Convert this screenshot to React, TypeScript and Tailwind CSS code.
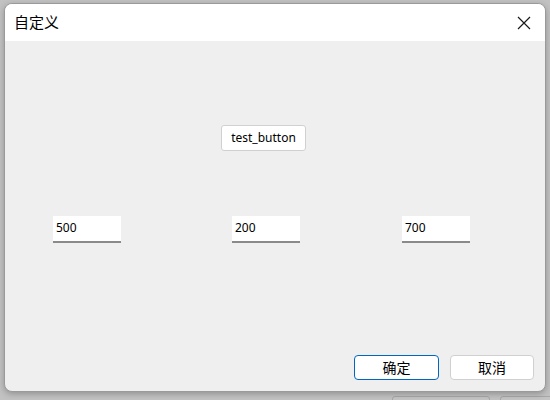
export default function App() {
  return (
    <div className="relative h-[400px] w-[550px] overflow-hidden bg-[#c2c2c2] pl-[4px] pt-[3px] font-['Noto_Sans','Noto_Sans_CJK_SC',sans-serif]">
      {/* window peeking out behind */}
      <div className="absolute left-[392px] top-[396px] h-[10px] w-[98px] rounded-t-[3px] border border-[#a8a8a8] bg-[#c4c4c4]" />
      <div className="absolute left-[500px] top-[396px] h-[10px] w-[60px] rounded-t-[3px] border border-[#a8a8a8] bg-[#c4c4c4]" />

      <div className="relative flex h-[389px] w-[542px] flex-col overflow-hidden rounded-[8px] border border-[#9a9a9a] bg-[#efefef] shadow-[0_2px_6px_rgba(0,0,0,0.25)]">
        <div className="flex h-[37px] shrink-0 items-center justify-between bg-white pl-[9px] pr-[10px]">
          <span className="text-[15px] text-black">自定义</span>
          <svg width="14" height="14" viewBox="0 0 14 14" className="mr-[4px]">
            <path d="M1 1 L13 13 M13 1 L1 13" stroke="#1a1a1a" strokeWidth="1.2" fill="none" />
          </svg>
        </div>

        <div className="flex flex-1 flex-col">
          <div className="ml-[216px] mt-[84px]">
            <button className="flex h-[26px] w-[85px] items-center justify-center rounded-[3px] border border-[#d0d0d0] bg-white text-[12px] text-black">
              test_button
            </button>
          </div>

          <div className="mt-[65px] flex">
            <div className="ml-[48px] flex h-[27px] w-[68px] items-center border-b-2 border-[#8a8a8a] bg-white pb-[2px] pl-[3px] text-[12px] text-black">500</div>
            <div className="ml-[111px] flex h-[27px] w-[68px] items-center border-b-2 border-[#8a8a8a] bg-white pb-[2px] pl-[3px] text-[12px] text-black">200</div>
            <div className="ml-[102px] flex h-[27px] w-[68px] items-center border-b-2 border-[#8a8a8a] bg-white pb-[2px] pl-[3px] text-[12px] text-black">700</div>
          </div>

          <div className="mt-[112px] flex">
            <button className="ml-[349px] flex h-[25px] w-[85px] items-center justify-center rounded-[4px] border border-[#0067c0] bg-white text-[14px] text-black">
              确定
            </button>
            <button className="ml-[11px] flex h-[25px] w-[84px] items-center justify-center rounded-[4px] border border-[#d0d0d0] bg-white text-[14px] text-black">
              取消
            </button>
          </div>
        </div>
      </div>
    </div>
  );
}
